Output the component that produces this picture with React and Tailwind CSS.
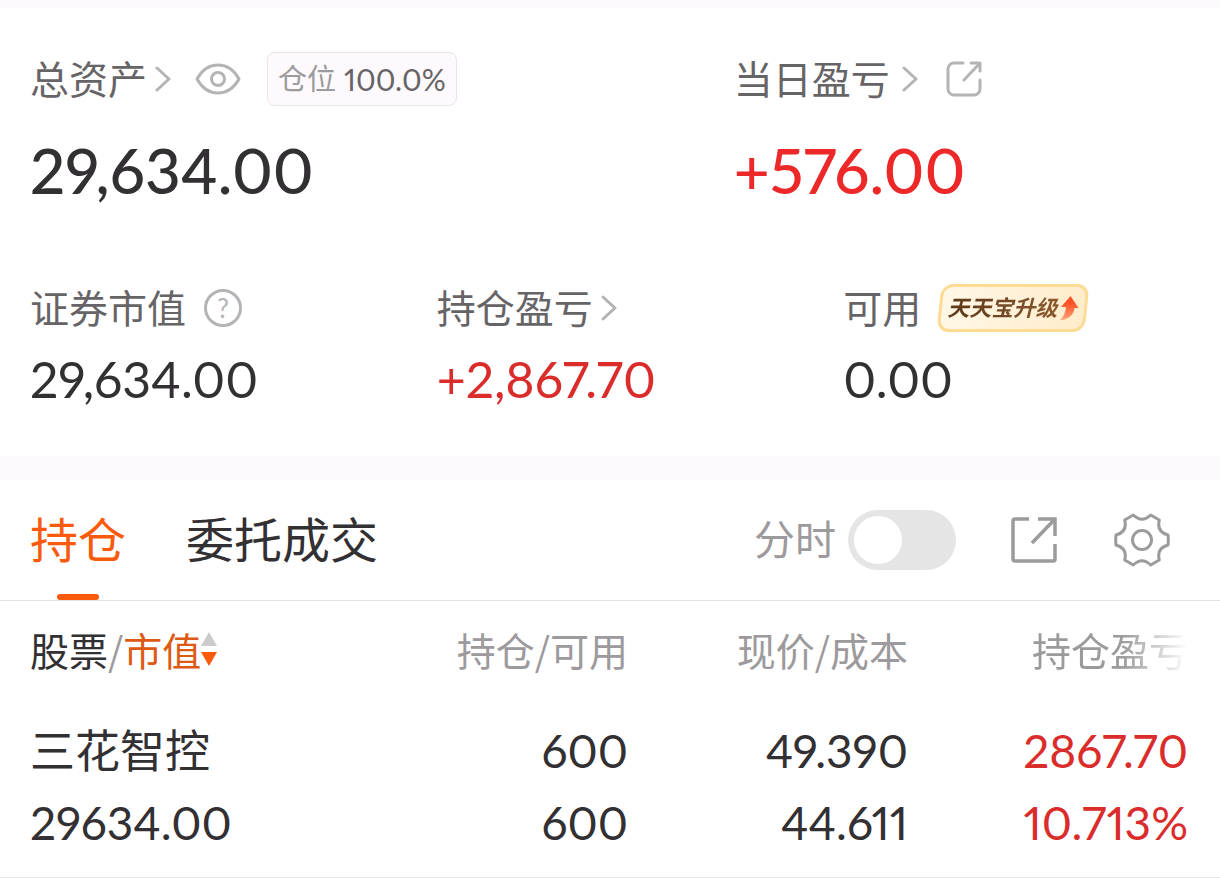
// src/App.jsx
import React, { useState } from 'react';

const holdings = [
  {
    name: '三花智控',
    marketValue: '29634.00',
    shares: '600',
    available: '600',
    price: '49.390',
    cost: '44.611',
    profit: '2867.70',
    profitRate: '10.713%',
  },
];

const ChevronIcon = () => (
  <svg width="16" height="26" viewBox="0 0 16 26" fill="none" stroke="#b5b3b5" strokeWidth="3" aria-hidden="true">
    <path d="M2 2l12 11L2 24" strokeLinecap="round" strokeLinejoin="round" />
  </svg>
);

const EyeIcon = () => (
  <svg width="46" height="32" viewBox="0 0 46 32" fill="none" stroke="#b5b3b5" strokeWidth="3" aria-hidden="true">
    <path d="M2 16C7 7 14 2 23 2s16 5 21 14c-5 9-12 14-21 14S7 25 2 16z" strokeLinejoin="round" />
    <circle cx="23" cy="16" r="6.5" />
  </svg>
);

const ShareIcon = () => (
  <svg width="36" height="36" viewBox="0 0 36 36" fill="none" stroke="#b5b3b5" strokeWidth="3" strokeLinecap="round" strokeLinejoin="round" aria-hidden="true">
    <path d="M17 2H8a6 6 0 0 0-6 6v20a6 6 0 0 0 6 6h20a6 6 0 0 0 6-6V19" />
    <path d="M25 2h9v8M34 2L18 19" />
  </svg>
);

const OpenIcon = () => (
  <svg width="48" height="48" viewBox="0 0 48 48" fill="none" stroke="#9c9a9c" strokeWidth="3.5" aria-hidden="true">
    <path d="M19 3H5a2 2 0 0 0-2 2v38a2 2 0 0 0 2 2h38a2 2 0 0 0 2-2V28" />
    <path d="M28 3h17v17M45 3L22 27" />
  </svg>
);

const GearIcon = () => (
  <svg width="56" height="56" viewBox="-28 -28 56 56" fill="none" stroke="#9c9a9c" strokeWidth="3" strokeLinejoin="round" aria-hidden="true">
    <path d="M-8.7-25Q0-16.500 8.7-25L17.3-20Q14.3-8.200 26-5Q26.6 0 26 5Q14.3 8.200 17.3 20L8.7 25Q0 16.500-8.7 25L-17.3 20Q-14.3 8.200-26 5Q-26.6 0-26-5Q-14.3-8.200-17.3-20z" />
    <circle r="9.5" />
  </svg>
);

const UpgradeArrow = () => (
  <svg width="20" height="24" viewBox="0 0 20 24" aria-hidden="true">
    <defs>
      <linearGradient id="upgrade" x1="0" y1="0" x2="0" y2="1">
        <stop offset="0.3" stopColor="#ff5127" />
        <stop offset="1" stopColor="#ffa477" />
      </linearGradient>
    </defs>
    <path d="M11.500 0L19.500 12H15.500C15 18 10 24 1 24C5 20.500 6.500 16 7 11H2z" fill="url(#upgrade)" />
  </svg>
);

const SortIcon = () => (
  <svg width="16" height="34" viewBox="0 0 16 34" aria-hidden="true">
    <path d="M8 0l8 14H0z" fill="#cccacc" />
    <path d="M8 34l8-14H0z" fill="#f95a0b" />
  </svg>
);

const Label = ({ children }) => (
  <span className="text-[39px] leading-[48px] text-[#666466]">{children}</span>
);

const App = () => {
  const [timeline, setTimeline] = useState(false);
  const [tab, setTab] = useState('holding');

  return (
    <main className="min-h-screen bg-white font-['Lato','Noto_Sans_CJK_SC',sans-serif] text-[#323032] proportional-nums">
      {/* Assets */}
      <section className="border-t-8 border-[#fef9fd] pt-11 pb-11">
        <div className="grid grid-cols-[15fr_11fr]">
          <div className="pl-[30px]">
            <div className="flex h-[54px] items-center">
              <button type="button" className="flex items-center gap-2">
                <Label>总资产</Label>
                <ChevronIcon />
              </button>
              <button type="button" aria-label="显示资产" className="ml-6">
                <EyeIcon />
              </button>
              <span className="ml-[26px] flex h-[54px] items-center gap-2 rounded-lg border border-[#e8e5e8] bg-[#fef9fd] px-[10px]">
                <span className="text-[29px] text-[#9c9a9c]">仓位</span>
                <span className="text-[30px] text-[#666466]">100.0%</span>
              </span>
            </div>
            <p className="mt-6 text-[62px] leading-[80px] font-medium">29,634.00</p>
          </div>

          <div className="pl-[30px]">
            <div className="flex h-[54px] items-center">
              <button type="button" className="flex items-center gap-3">
                <Label>当日盈亏</Label>
                <ChevronIcon />
              </button>
              <button type="button" aria-label="分享" className="ml-7">
                <ShareIcon />
              </button>
            </div>
            <p className="mt-6 text-[62px] leading-[80px] font-medium text-[#ec2828]">+576.00</p>
          </div>
        </div>

        <div className="mt-[74px] grid grid-cols-3">
          <div className="pl-[30px]">
            <div className="flex h-12 items-center gap-[18px]">
              <Label>证券市值</Label>
              <button
                type="button"
                className="flex size-[38px] items-center justify-center rounded-full border-3 border-[#b5b3b5] text-[26px] text-[#b5b3b5]"
              >
                ?
              </button>
            </div>
            <p className="mt-[14px] text-[50px] leading-[66px]">29,634.00</p>
          </div>

          <div className="pl-[30px]">
            <button type="button" className="flex h-12 items-center gap-2">
              <Label>持仓盈亏</Label>
              <ChevronIcon />
            </button>
            <p className="mt-[14px] text-[50px] leading-[66px] text-[#db2c2c]">+2,867.70</p>
          </div>

          <div className="pl-[30px]">
            <div className="flex h-12 items-center gap-[18px]">
              <Label>可用</Label>
              <button type="button" className="relative flex h-12 items-center px-2">
                <span className="absolute inset-0 -skew-x-6 rounded-xl border-3 border-[#fddb93] bg-linear-to-r from-[#fff7e6] to-[#ffeccb]" />
                <span className="relative bg-linear-to-r from-[#5a3719] to-[#8a5a2e] bg-clip-text pr-[2px] pb-[2px] text-[22px] font-bold text-transparent italic">
                  天天宝升级
                </span>
                <span className="relative">
                  <UpgradeArrow />
                </span>
              </button>
            </div>
            <p className="mt-[14px] text-[50px] leading-[66px]">0.00</p>
          </div>
        </div>
      </section>

      {/* Holdings */}
      <section className="border-t-24 border-[#fef9fd]">
        <div className="flex h-[121px] items-center border-b border-[#e4e2e4] pr-8 pl-[30px]">
          <nav className="flex h-full gap-[60px]">
            <button
              type="button"
              onClick={() => setTab('holding')}
              className={`relative text-[48px] ${tab === 'holding' ? 'text-[#f95a0b]' : ''}`}
            >
              持仓
              {tab === 'holding' && (
                <span className="absolute inset-x-0 bottom-0 mx-auto h-[6px] w-[42px] rounded-full bg-[#f95a0b]" />
              )}
            </button>
            <button
              type="button"
              onClick={() => setTab('orders')}
              className={`text-[48px] ${tab === 'orders' ? 'text-[#f95a0b]' : ''}`}
            >
              委托成交
            </button>
          </nav>

          <label className="ml-auto flex items-center gap-3 text-[41px] text-[#9c9a9c]">
            分时
            <input
              type="checkbox"
              checked={timeline}
              onChange={(e) => setTimeline(e.target.checked)}
              className="flex h-[60px] w-[108px] appearance-none items-center rounded-full bg-[#e6e5e6] px-[6px] before:size-12 before:rounded-full before:bg-white checked:justify-end checked:bg-[#f95a0b]"
            />
          </label>
          <button type="button" aria-label="打开" className="ml-[54px]">
            <OpenIcon />
          </button>
          <button type="button" aria-label="设置" className="mr-[18px] ml-[56px]">
            <GearIcon />
          </button>
        </div>

        <table className="w-full table-fixed">
          <thead className="font-['Noto_Sans_CJK_SC',sans-serif] text-[39px] text-[#9c9a9c]">
            <tr className="h-[96px]">
              <th className="pl-[30px] text-left font-normal">
                <button type="button" className="flex items-center">
                  <span className="text-[#323032]">股票</span>/
                  <span className="text-[#dd5a14]">市值</span>
                  <SortIcon />
                </button>
              </th>
              <th className="w-[280px] text-right font-normal">持仓/可用</th>
              <th className="w-[280px] text-right font-normal">现价/成本</th>
              <th className="w-[312px] pr-8 text-right font-normal">
                <span className="inline-block [mask-image:linear-gradient(to_right,black_58%,transparent_100%)]">持仓盈亏</span>
              </th>
            </tr>
          </thead>
          <tbody className="text-[46px] leading-[72px]">
            {holdings.map((item) => (
              <tr key={item.name} className="border-b border-[#e8e7ea]">
                <td className="pt-[18px] pb-[18px] pl-[30px]">
                  <div className="text-[45px] leading-[72px]">{item.name}</div>
                  <div>{item.marketValue}</div>
                </td>
                <td className="py-[18px] text-right">
                  <div>{item.shares}</div>
                  <div>{item.available}</div>
                </td>
                <td className="py-[18px] text-right">
                  <div>{item.price}</div>
                  <div>{item.cost}</div>
                </td>
                <td className="py-[18px] pr-8 text-right text-[#db2c2c]">
                  <div>{item.profit}</div>
                  <div>{item.profitRate}</div>
                </td>
              </tr>
            ))}
          </tbody>
        </table>
      </section>
    </main>
  );
};

export default App;
